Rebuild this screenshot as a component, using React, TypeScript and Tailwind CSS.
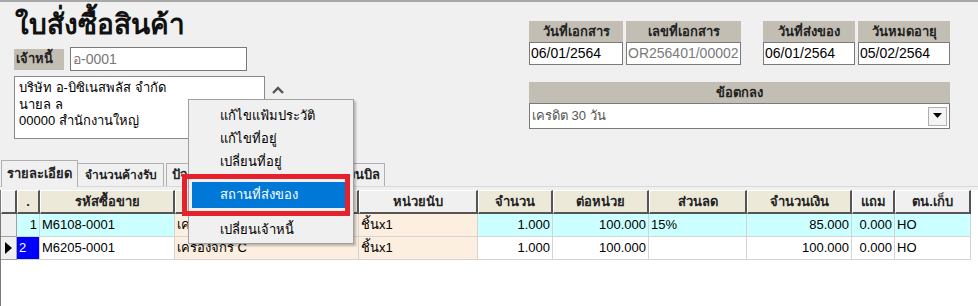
import React from "react";

const hdrBg = "bg-[#c2beb3]";

function DateBox({ label, value, w, muted }: { label: string; value: string; w: string; muted?: boolean }) {
  return (
    <div className={`flex flex-col ${w}`}>
      <div className={`h-[21px] ${hdrBg} flex items-center justify-center font-bold text-[13px] text-[#222]`}>{label}</div>
      <div className={`h-[23px] bg-white border border-[#7a7a7a] flex items-center pl-[1px] text-[14px] ${muted ? "text-[#7a7a7a]" : "text-black"}`}>{value}</div>
    </div>
  );
}

const cols = [
  { w: "w-[16px]" },
  { w: "w-[23px]" },
  { w: "w-[135px]" },
  { w: "w-[184px]" },
  { w: "w-[119px]" },
  { w: "w-[75px]" },
  { w: "w-[96px]" },
  { w: "w-[98px]" },
  { w: "w-[105px]" },
  { w: "w-[43px]" },
  { w: "w-[76px]" },
];

const headers = [
  { t: "", bg: "bg-[#f0f0f0]" },
  { t: ".", bg: "bg-[#ece9d8]" },
  { t: "รหัสซื้อขาย", bg: "bg-[#ece9d8]" },
  { t: "ชื่อสินค้า", bg: "bg-[#ece9d8]" },
  { t: "หน่วยนับ", bg: "bg-[#f0f0f0]" },
  { t: "จำนวน", bg: "bg-[#ece9d8]" },
  { t: "ต่อหน่วย", bg: "bg-[#ece9d8]" },
  { t: "ส่วนลด", bg: "bg-[#ece9d8]" },
  { t: "จำนวนเงิน", bg: "bg-[#ece9d8]" },
  { t: "แถม", bg: "bg-[#f0f0f0]" },
  { t: "ตน.เก็บ", bg: "bg-[#f0f0f0]" },
];

type Cell = { t: string; bg: string; right?: boolean; cls?: string };

function Row({ cells, pointer }: { cells: Cell[]; pointer?: boolean }) {
  return (
    <div className="flex h-[23px]">
      <div className="w-[16px] h-full bg-[#f0f0f0] border-r border-b border-[#a0a0a0] flex items-center">
        {pointer && (
          <svg width="10" height="14" viewBox="0 0 10 14" className="ml-[3px]">
            <polygon points="1,1 8,7 1,13" fill="#000" />
          </svg>
        )}
      </div>
      {cells.map((c, i) => (
        <div
          key={i}
          className={`${cols[i + 1].w} h-full ${c.bg} border-r border-b border-[#d4d4d4] flex items-center overflow-hidden whitespace-nowrap ${
            c.right ? "justify-end pr-[2px]" : "pl-[2px]"
          } ${c.cls ?? ""}`}
        >
          {c.t}
        </div>
      ))}
    </div>
  );
}

export default function App() {
  const cyan = "bg-[#ccffff]";
  const tan = "bg-[#fdefdf]";
  const white = "bg-white";
  return (
    <div
      className="relative w-[978px] h-[306px] overflow-hidden bg-[#f0f0f0] text-[13px] text-black"
      style={{ fontFamily: "Tahoma, 'Liberation Sans', 'Noto Sans', sans-serif" }}
    >
      <div className="h-[2px] bg-[#a8a8a8]" />
      {/* Top section */}
      <div className="flex h-[155px]">
        {/* Left */}
        <div className="w-[529px] pl-[14px]">
          <div className="h-[44px] pt-[5px] pl-[1px] text-[28px] font-bold leading-[36px] text-[#111]">ใบสั่งซื้อสินค้า</div>
          <div className="flex items-center h-[24px] mt-[1px]">
            <div className={`w-[50px] h-[21px] ${hdrBg} flex items-center pl-[2px] text-[13px] font-bold text-[#222]`}>เจ้าหนี้</div>
            <div className="ml-[6px] w-[177px] h-[24px] bg-white border border-[#7a7a7a] flex items-center pl-[2px] text-[14px] text-[#777]">อ-0001</div>
          </div>
          <div className="flex mt-[5px]">
            <div className="w-[251px] h-[63px] bg-white border border-[#8a8a8a] pl-[4px] pt-[3px] leading-[16.5px] text-[13px]">
              <div>บริษัท อ-บิซิเนสพลัส จำกัด</div>
              <div>นายล ล</div>
              <div>00000 สำนักงานใหญ่</div>
            </div>
            <svg width="14" height="10" viewBox="0 0 14 10" className="ml-[6px] mt-[9px]">
              <polyline points="2,8 7,3 12,8" fill="none" stroke="#555" strokeWidth="2.4" />
            </svg>
          </div>
        </div>
        {/* Right */}
        <div className="w-[421px] pt-[19px]">
          <div className="flex">
            <DateBox label="วันที่เอกสาร" value="06/01/2564" w="w-[94px]" />
            <div className="w-[3px]" />
            <DateBox label="เลขที่เอกสาร" value="OR256401/00002" w="w-[115px]" muted />
            <div className="w-[22px]" />
            <DateBox label="วันที่ส่งของ" value="06/01/2564" w="w-[92px]" />
            <div className="w-[3px]" />
            <DateBox label="วันหมดอายุ" value="05/02/2564" w="w-[92px]" />
          </div>
          <div className="mt-[17px] flex flex-col w-[421px]">
            <div className={`h-[21px] ${hdrBg} flex items-center justify-center font-bold text-[13px] text-[#222]`}>ข้อตกลง</div>
            <div className="h-[26px] bg-white border border-[#7a7a7a] flex items-center justify-between pl-[2px] pr-[2px] text-[13px] text-[#555]">
              <span>เครดิต 30 วัน</span>
              <div className="w-[19px] h-[19px] bg-[#f4f4f4] border border-[#b0b0b0] flex items-center justify-center">
                <svg width="9" height="6" viewBox="0 0 9 6">
                  <polygon points="0,0 9,0 4.5,5" fill="#000" />
                </svg>
              </div>
            </div>
          </div>
        </div>
      </div>
      {/* Tabs */}
      <div className="flex items-end h-[29px] pl-[1px]">
        <div className="w-[77px] h-[27px] bg-[#f0f0f0] border-t border-l border-r border-[#b0b0b0] flex items-center justify-center text-[13px] font-bold text-[#222] -mb-[1px] relative z-10">
          รายละเอียด
        </div>
        <div className="w-[86px] h-[23px] bg-[#f0f0f0] border-t border-r border-[#b0b0b0] flex items-center justify-center text-[12px] font-bold text-[#222] whitespace-nowrap">จำนวนค้างรับ</div>
        <div className="ml-[2px] w-[100px] h-[23px] bg-[#f0f0f0] border-t border-l border-r border-[#b0b0b0] flex items-center pl-[5px] text-[13px] font-bold text-[#222]">ปัจจัยอื่น</div>
        <div className="ml-[1px] w-[118px] h-[23px] bg-[#f0f0f0] border-t border-r border-[#b0b0b0] flex items-center justify-end pr-[4px] text-[13px] font-bold text-[#222]">ยอดเงินบิล</div>
      </div>
      <div className="h-[4px] border-t border-[#d8d8d8] bg-[#f0f0f0]" />
      {/* Grid */}
      <div className="bg-white border-l border-[#7a7a7a] h-[200px]">
        <div className="flex h-[24px]">
          {headers.map((h, i) => (
            <div
              key={i}
              className={`${cols[i].w} h-full ${h.bg} border-t border-l border-white border-r-2 border-b-2 border-r-[#555] border-b-[#555] flex items-center justify-center font-bold text-[13px] text-[#222] whitespace-nowrap overflow-hidden`}
            >
              {h.t}
            </div>
          ))}
        </div>
        <Row
          cells={[
            { t: "1", bg: cyan, right: true },
            { t: "M6108-0001", bg: cyan },
            { t: "เครื่องจักร A", bg: tan },
            { t: "ชิ้นx1", bg: tan },
            { t: "1.000", bg: cyan, right: true },
            { t: "100.000", bg: cyan, right: true },
            { t: "15%", bg: cyan },
            { t: "85.000", bg: cyan, right: true },
            { t: "0.000", bg: cyan, right: true },
            { t: "HO", bg: cyan },
          ]}
        />
        <Row
          pointer
          cells={[
            { t: "2", bg: "bg-[#0000ff]", cls: "text-white" },
            { t: "M6205-0001", bg: white },
            { t: "เครื่องจักร C", bg: tan },
            { t: "ชิ้นx1", bg: tan },
            { t: "1.000", bg: white, right: true },
            { t: "100.000", bg: white, right: true },
            { t: "", bg: white },
            { t: "100.000", bg: white, right: true },
            { t: "0.000", bg: white, right: true },
            { t: "HO", bg: white },
          ]}
        />
      </div>

      {/* Context menu */}
      <div className="absolute left-[188px] top-[99px] w-[166px] h-[145px] bg-[#f0f0f0] border border-[#a0a0a0] shadow-[2px_2px_2px_rgba(0,0,0,0.25)] pt-[4px] px-[3px] text-[13px]">
        <div className="h-[23px] flex items-center pl-[28px]">แก้ไขแฟ้มประวัติ</div>
        <div className="h-[23px] flex items-center pl-[28px]">แก้ไขที่อยู่</div>
        <div className="h-[23px] flex items-center pl-[28px]">เปลี่ยนที่อยู่</div>
        <div className="h-[9px] flex items-center"><div className="w-full h-[1px] bg-[#d0d0d0] ml-[25px]" /></div>
        <div className="h-[26px] flex items-center pl-[28px] bg-[#0078d7] text-white">สถานที่ส่งของ</div>
        <div className="h-[10px] flex items-center"><div className="w-full h-[1px] bg-[#d0d0d0] ml-[25px]" /></div>
        <div className="h-[23px] flex items-center pl-[28px]">เปลี่ยนเจ้าหนี้</div>
      </div>
      <div className="absolute left-[182px] top-[174px] w-[168px] h-[42px] border-[5px] border-[#e5212b]" />
    </div>
  );
}
